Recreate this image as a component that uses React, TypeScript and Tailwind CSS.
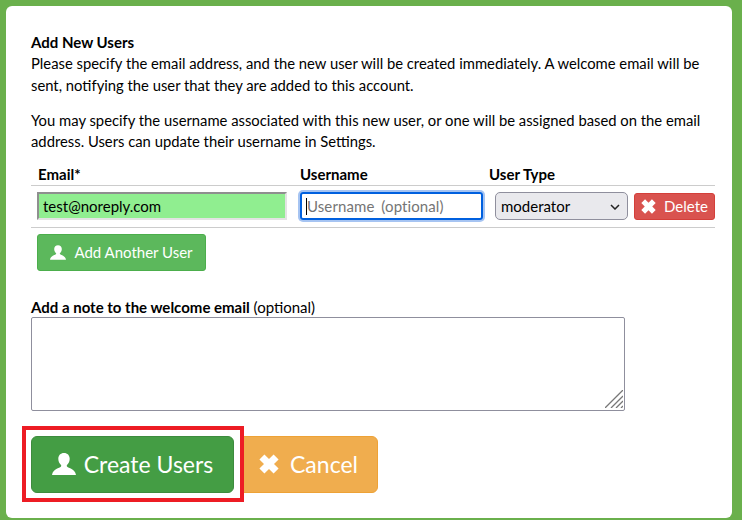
import React from 'react';

const UserIcon: React.FC<{ className?: string }> = ({ className }) => (
    <svg viewBox="0 0 24 22" className={className} fill="currentColor">
        <path d="M12 0C8.600 0 6.300 2.400 6.300 5.800c0 2.500 1 4.700 2.500 6 .6.500.6 1.500 0 2C7.600 15 1 15.800 0 22h24c-1-6.200-7.600-7-8.800-8.200-.6-.5-.6-1.500 0-2 1.500-1.300 2.500-3.500 2.500-6C17.700 2.400 15.400 0 12 0z" />
    </svg>
);

const CrossIcon: React.FC<{ className?: string }> = ({ className }) => (
    <svg viewBox="0 0 24 24" className={className} fill="currentColor">
        <path d="M6.500 0.500 12 6 17.500 0.500 23.500 6.500 18 12 23.500 17.500 17.500 23.500 12 18 6.500 23.500 0.500 17.500 6 12 0.500 6.500z" />
    </svg>
);

const App: React.FC = () => {
    return (
        <div className="w-[742px] h-[520px] overflow-hidden bg-[#6ab04c] pt-[6px] pl-[6px] pr-[10px] pb-[2px] font-['Lato',sans-serif] text-[14.8px] leading-[21.14px] text-black">
            <div className="h-full rounded-[6px] bg-white pl-[25px] pr-[17px] pt-[26.3px]">
                <p className="font-bold text-[15px]">Add New Users</p>
                <p>Please specify the email address, and the new user will be created immediately. A welcome email will be sent, notifying the user that they are added to this account.</p>
                <p className="mt-[14px]">You may specify the username associated with this new user, or one will be assigned based on the email address. Users can update their username in Settings.</p>

                <div className="mt-[11.7px] flex h-[21px] border-b border-[#ccc] pl-[7px] font-bold text-[15px] box-content">
                    <div className="w-[262px]">Email*</div>
                    <div className="w-[189px]">Username</div>
                    <div>User Type</div>
                </div>
                <div className="flex h-[42px] items-center border-b border-[#ccc] pl-[6px]">
                    <input
                        readOnly
                        value="test@noreply.com"
                        className="h-[28px] w-[250px] border-2 border-t-[#8f8f8f] border-l-[#8f8f8f] border-r-[#e3e3e3] border-b-[#e3e3e3] bg-[#90ee90] px-[4px] text-[15px] outline-none"
                    />
                    <div className="relative ml-[13px]">
                        <input
                            readOnly
                            placeholder="Username (optional)"
                            className="block h-[28px] w-[183px] rounded-[3px] border-2 border-[#0060df] px-[5px] text-[15px] [word-spacing:3px] tracking-[0.1px] outline-none shadow-[0_0_0_2px_#a6c4f2] placeholder:text-[#757575]"
                        />
                        <span className="absolute left-[6px] top-[6px] h-[17px] w-px bg-black" />
                    </div>
                    <div className="relative ml-[12px]">
                        <select className="block h-[28px] w-[133px] appearance-none rounded-[5px] border border-[#8f8f9d] bg-[#e9e9ed] pl-[5px] text-[15px] outline-none">
                            <option>moderator</option>
                        </select>
                        <svg viewBox="0 0 10 6" className="pointer-events-none absolute right-[8px] top-[12px] h-[6px] w-[10px]" fill="none" stroke="#222" strokeWidth="1.500">
                            <path d="M1 1l4 4 4-4" />
                        </svg>
                    </div>
                    <button className="ml-[6px] flex h-[27px] w-[81px] items-center justify-center gap-[8px] rounded-[3px] border border-[#d43f3a] bg-[#d9534f] text-[15px] text-white">
                        <CrossIcon className="h-[15px] w-[15px]" />
                        <span>Delete</span>
                    </button>
                </div>
                <button className="ml-[6px] mt-[6px] flex h-[37px] w-[169px] items-center justify-center gap-[8px] rounded-[3px] border border-[#4cae4c] bg-[#5cb85c] text-[15px] text-white">
                    <UserIcon className="h-[15px] w-[16px]" />
                    <span>Add Another User</span>
                </button>

                <p className="mt-[26px] text-[15px] h-[20px]"><span className="font-bold">Add a note to the welcome email</span> (optional)</p>
                <div className="relative w-[594px]">
                    <textarea readOnly className="block h-[94px] w-[594px] resize-none rounded-[2px] border border-[#8f8f9d] bg-white outline-none" />
                    <svg viewBox="0 0 18 18" className="absolute right-[2px] bottom-[3px] h-[18px] w-[18px]" stroke="#777" strokeWidth="1.300" fill="none">
                        <path d="M0 18 18 0M6 18 18 6M11 18 18 11M16 18 18 16" />
                    </svg>
                </div>

                <div className="mt-[25px] flex">
                    <div className="relative">
                        <button className="flex h-[57px] w-[203px] items-center justify-center gap-[8px] rounded-[6px] border border-[#3d8b3d] bg-[#449d44] text-[23px] text-white">
                            <UserIcon className="h-[22px] w-[24px]" />
                            <span>Create Users</span>
                        </button>
                        <span className="absolute left-[-9px] top-[-10px] h-[76px] w-[222px] border-[4px] border-[#ed1c24]" />
                    </div>
                    <button className="ml-[9px] flex h-[57px] w-[135px] items-center justify-start gap-[11px] rounded-r-[6px] border border-[#eea236] bg-[#f0ad4e] pl-[15px] text-[23px] text-white">
                        <CrossIcon className="h-[20px] w-[20px]" />
                        <span>Cancel</span>
                    </button>
                </div>
            </div>
        </div>
    );
};

export default App;
